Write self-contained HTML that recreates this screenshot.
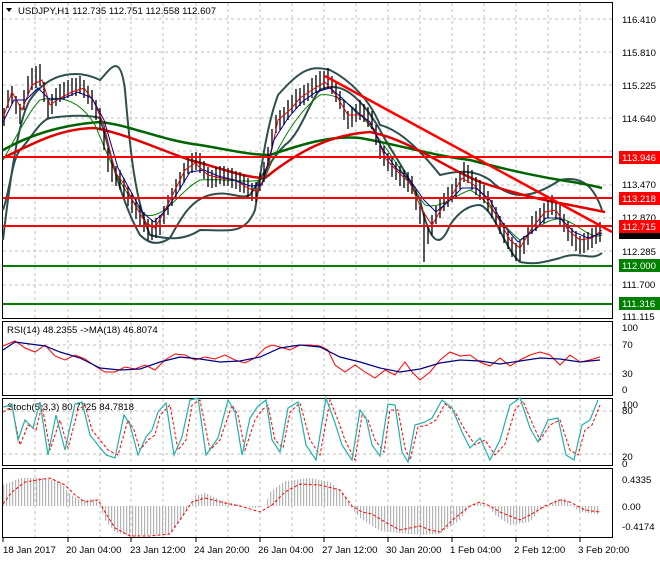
<!DOCTYPE html>
<html><head><meta charset="utf-8"><style>
html,body{margin:0;padding:0;background:#fff;}
body{width:660px;height:560px;overflow:hidden;font-family:"Liberation Sans",sans-serif;}
svg text{font-family:"Liberation Sans",sans-serif;font-size:9.6px;fill:#000;}
</style></head><body>
<svg width="660" height="560" viewBox="0 0 660 560" xmlns="http://www.w3.org/2000/svg">
<defs><pattern id="vl" width="3" height="10" patternUnits="userSpaceOnUse"><rect x="0" y="0" width="1.2" height="10" fill="#b4b4b4"/></pattern></defs>
<rect width="660" height="560" fill="#fff"/>
<g stroke="#c0c0c0" stroke-dasharray="3,3" stroke-width="1">
<path d="M35 3V318M68 3V318M100 3V318M131 3V318M163 3V318M196 3V318M228 3V318M260 3V318M292 3V318M324 3V318M356 3V318M388 3V318M420 3V318M452 3V318M484 3V318M516 3V318M548 3V318M580 3V318"/>
<path d="M35 322V395M68 322V395M100 322V395M131 322V395M163 322V395M196 322V395M228 322V395M260 322V395M292 322V395M324 322V395M356 322V395M388 322V395M420 322V395M452 322V395M484 322V395M516 322V395M548 322V395M580 322V395"/>
<path d="M35 399V465M68 399V465M100 399V465M131 399V465M163 399V465M196 399V465M228 399V465M260 399V465M292 399V465M324 399V465M356 399V465M388 399V465M420 399V465M452 399V465M484 399V465M516 399V465M548 399V465M580 399V465"/>
<path d="M35 469V537M68 469V537M100 469V537M131 469V537M163 469V537M196 469V537M228 469V537M260 469V537M292 469V537M324 469V537M356 469V537M388 469V537M420 469V537M452 469V537M484 469V537M516 469V537M548 469V537M580 469V537"/>
<path d="M3 19H612M3 52H612M3 85H612M3 118H612M3 151H612M3 185H612M3 218H612M3 251H612M3 285H612M3 345H612M3 374H612M3 411H612M3 454H612"/>
</g>
<g fill="none" stroke="#000" stroke-width="1">
<rect x="2.5" y="2.5" width="610" height="316"/>
<rect x="2.5" y="321.5" width="610" height="74"/>
<rect x="2.5" y="398.5" width="610" height="67"/>
<rect x="2.5" y="468.5" width="610" height="69"/>
</g>
<g fill="none">
<path d="M3 240C10 180 18 120 30 100C50 70 80 70 100 80C110 70 120 50 125 90C130 150 135 200 150 235C170 240 185 240 200 230C230 230 245 235 255 210C260 180 265 130 278 95C300 70 310 65 330 70C350 80 370 100 380 125C400 130 420 150 440 175C460 170 475 170 490 180C510 200 530 200 560 180C585 175 595 190 602 210" stroke="#2f4f4f" stroke-width="2"/>
<path d="M3 210C10 190 12 160 20 150C30 140 40 120 50 118C70 115 90 115 100 118C110 150 120 200 140 235C150 245 160 245 170 238C180 220 190 200 210 195C230 190 240 200 250 195C260 180 270 160 285 145C300 135 310 100 320 90C340 80 360 95 380 130C390 150 400 160 420 200C430 245 440 250 450 225C460 210 470 205 480 205C495 210 505 250 520 262C535 265 545 262 560 258C580 250 590 262 602 253" stroke="#2f4f4f" stroke-width="2"/>
<path d="M3 150C30 135 60 125 100 122C130 125 160 140 200 145C230 150 250 155 270 155C300 145 330 135 360 138C400 145 430 155 470 160C500 168 530 175 560 180C580 183 590 185 602 188" stroke="#006400" stroke-width="2.5"/>
<path d="M3 158C30 145 60 128 95 128C130 135 160 150 190 160C220 168 245 178 265 178C300 150 330 135 370 132C410 140 440 165 480 182C510 192 540 200 570 205C585 208 595 210 605 212" stroke="#e00000" stroke-width="2.5"/>
<path d="M3 160C20 130 30 110 40 100C60 95 80 100 95 125C110 160 120 190 145 215C165 220 180 190 200 180C230 178 250 185 265 178C280 140 300 110 320 95C340 92 360 110 380 140C395 160 410 185 425 205C440 210 455 195 470 190C490 200 500 225 520 240C535 230 550 215 565 220C580 225 590 240 602 235" stroke="#008000" stroke-width="1"/>
<path d="M4 108V126M8 90V108M12 86V104M16 96V114M20 104V124M24 90V110M28 76V96M32 68V90M36 66V88M40 64V86M44 82V102M48 98V118M52 94V114M56 88V106M60 84V102M64 82V100M68 80V98M72 78V96M76 78V96M80 76V94M84 80V98M88 86V104M92 90V110M96 100V120M100 108V130M104 128V150M108 148V172M112 160V182M116 166V186M120 170V190M124 178V198M128 186V206M132 193V213M136 199V219M140 205V225M144 212V232M148 219V240M152 220V240M156 218V238M160 215V235M164 206V224M168 195V215M172 188V206M176 179V199M180 172V190M184 163V183M188 156V174M192 153V173M196 152V170M200 153V173M204 161V179M208 167V187M212 170V188M216 167V187M220 166V184M224 166V186M228 168V186M232 168V188M236 171V189M240 172V192M244 175V193M248 178V198M252 183V201M256 182V202M260 173V191M264 162V182M268 147V165M272 129V149M276 115V133M280 110V130M284 107V125M288 100V120M292 95V113M296 89V109M300 88V106M304 85V105M308 83V101M312 78V98M316 75V93M320 71V91M324 71V89M328 68V88M332 76V94M336 82V102M340 91V109M344 100V120M348 111V129M352 107V127M356 104V122M360 100V120M364 104V122M368 107V127M372 111V129M376 125V145M380 141V159M384 146V166M388 153V171M392 157V177M396 162V180M400 166V186M404 170V188M408 172V192M412 176V194M416 190V210M420 206V224M424 212V262M428 226V244M432 215V235M436 206V224M440 198V218M444 193V211M448 187V207M452 184V202M456 178V198M460 171V189M464 162V182M468 165V183M472 170V190M476 177V195M480 180V200M484 185V203M488 191V211M492 200V218M496 207V227M500 216V234M504 223V243M508 231V249M512 237V257M516 243V261M520 241V261M524 236V254M528 225V245M532 216V234M536 211V231M540 208V226M544 203V223M548 200V218M552 195V215M556 201V219M560 205V225M564 214V232M568 221V241M572 228V246M576 231V251M580 236V254M584 233V253M588 232V250M592 228V248M596 226V244M600 222V242" stroke="#000" stroke-width="1.3"/>
<path d="M3 118L12 92L22 110L32 85L42 80L50 105L60 98L72 92L84 88L94 102L104 125L115 172L125 185L135 205L145 222L155 228L165 210L175 190L185 170L195 163L208 175L220 178L235 180L248 188L258 192L268 168L278 120L290 110L300 98L312 90L325 82L336 95L348 115L362 115L375 130L385 158L398 172L410 183L422 210L432 225L442 208L452 195L462 178L474 185L486 198L498 218L510 240L520 248L532 228L545 212L556 210L568 230L580 240L592 238L602 230" stroke="#e00000" stroke-width="1"/>
<path d="M3 122L14 100L26 100L38 88L50 100L64 98L78 92L92 98L104 120L118 168L130 190L142 212L154 222L166 210L178 192L190 172L204 170L218 176L234 180L250 186L262 185L274 140L288 118L302 102L316 92L330 88L342 98L356 112L370 122L382 148L396 168L410 180L424 200L436 212L448 202L462 188L476 188L490 200L504 226L518 242L532 232L546 218L560 218L574 232L588 238L602 233" stroke="#00008b" stroke-width="1"/>
<path d="M325 76L612 232" stroke="#ff0000" stroke-width="2.5"/>
<path d="M3 157H612M3 198H612M3 226H612" stroke="#ff0000" stroke-width="2"/>
<path d="M3 266H612M3 304H612" stroke="#008000" stroke-width="2"/>
</g>
<path d="M6 8L12 8L9 12Z" fill="#000"/>
<text x="18" y="14">USDJPY,H1  112.735 112.751 112.558 112.607</text>
<g>
<text x="622" y="23">116.410</text>
<text x="622" y="56">115.810</text>
<text x="622" y="89">115.225</text>
<text x="622" y="122">114.640</text>
<text x="622" y="188">113.470</text>
<text x="622" y="221">112.870</text>
<text x="622" y="255">112.285</text>
<text x="622" y="288">111.700</text>
<text x="622" y="320">111.115</text>
<rect x="619" y="151" width="41" height="13" fill="#ff0000"/><text x="622" y="161" style="fill:#fff">113.946</text>
<rect x="619" y="192" width="41" height="13" fill="#ff0000"/><text x="622" y="202" style="fill:#fff">113.218</text>
<rect x="619" y="230" width="41" height="9" fill="#000"/>
<rect x="619" y="220" width="41" height="13" fill="#ff0000"/><text x="622" y="230" style="fill:#fff">112.715</text>
<rect x="619" y="259" width="41" height="13" fill="#008000"/><text x="622" y="269" style="fill:#fff">112.000</text>
<rect x="619" y="297" width="41" height="13" fill="#008000"/><text x="622" y="307" style="fill:#fff">111.316</text>
</g>
<text x="7" y="333">RSI(14) 48.2355  -&gt;MA(18) 46.8074</text>
<path d="M3 346L15 341L25 348L35 352L45 345L55 356L65 360L75 355L85 359L95 366L105 372L115 372L125 367L135 369L145 365L155 370L165 360L175 354L185 355L195 360L205 357L215 359L225 355L235 360L245 363L255 358L265 348L272 345L280 347L290 350L300 345L310 345L320 346L328 350L335 365L345 372L355 365L365 372L375 378L385 370L395 375L405 362L412 372L420 380L430 372L440 360L450 352L460 356L470 355L480 362L490 366L500 358L510 366L520 360L530 355L540 352L550 355L560 365L570 355L580 362L590 360L600 357" fill="none" stroke="#ff0000" stroke-width="1"/>
<path d="M3 350L15 342L30 344L45 346L60 352L80 358L100 368L120 370L140 369L160 362L180 357L200 359L220 362L240 361L260 357L280 348L300 345L320 347L340 357L360 362L380 368L400 372L420 369L440 363L460 360L480 361L500 364L520 361L540 358L560 359L580 362L600 360" fill="none" stroke="#000080" stroke-width="1.2"/>
<g><text x="622" y="331">100</text><text x="622" y="348">70</text><text x="622" y="377">30</text><text x="622" y="393">0</text></g>
<text x="7" y="410">Stoch(5,3,3) 80.7725 84.7818</text>
<path d="M3 412L12 407L20 445L28 425L36 430L42 405L50 450L60 420L68 448L78 410L85 405L92 430L100 440L108 450L118 455L128 420L134 430L140 450L148 440L155 435L160 415L170 405L178 450L186 440L192 405L200 400L210 450L220 440L232 405L238 415L245 450L255 420L262 410L268 405L275 440L283 448L290 412L300 403L310 440L320 455L330 400L338 420L345 440L355 460L362 415L368 420L375 440L384 452L390 410L398 410L405 448L410 460L418 427L428 425L436 420L445 404L455 412L465 430L475 445L485 440L495 455L505 444L515 410L523 401L533 425L540 440L550 425L560 420L570 450L578 455L585 430L592 425L600 405" fill="none" stroke="#ff0000" stroke-width="1" stroke-dasharray="3,2"/>
<path d="M3 407L12 405L18 440L25 420L33 428L40 402L48 455L56 415L65 450L75 404L82 402L90 435L98 445L106 455L115 458L124 415L130 425L138 455L146 437L152 430L158 412L166 403L174 455L182 437L190 400L198 398L206 455L218 438L228 400L235 412L242 455L250 418L258 406L266 400L272 440L280 452L288 408L298 402L306 445L316 460L326 398L334 420L342 445L352 460L360 410L366 418L372 445L380 456L388 404L395 405L402 452L408 462L415 425L425 422L432 418L442 400L452 408L462 432L470 448L480 438L490 460L500 440L510 405L520 398L530 428L538 442L548 420L558 418L566 455L574 460L582 425L590 420L598 400" fill="none" stroke="#20b2aa" stroke-width="1.2"/>
<g><text x="622" y="408">100</text><text x="622" y="414">80</text><text x="622" y="460">20</text><text x="622" y="467">0</text></g>
<path d="M3 506L3 485L20 478L45 478L60 482L70 494L80 500L95 499L100 506L105 520L115 532L130 536L150 535L170 534L180 520L190 506L195 496L205 493L220 500L240 505L255 508L265 506L270 492L285 481L310 478L330 482L345 495L350 506L360 518L380 531L400 533L420 535L440 534L460 520L470 506L478 502L488 506L495 515L510 525L530 522L540 510L548 506L555 500L565 498L572 506L580 512L598 514L600 506Z" fill="url(#vl)"/>
<path d="M3 504L12 492L25 482L50 478L65 485L75 495L85 502L98 500L105 512L115 528L130 536L150 536L170 534L180 520L192 502L205 498L225 503L240 506L260 512L272 505L285 492L300 484L320 485L340 490L352 506L362 512L372 514L385 522L400 530L420 526L430 530L440 532L455 518L470 506L480 502L490 506L500 512L520 520L530 515L545 506L560 500L570 502L585 510L600 512" fill="none" stroke="#ff0000" stroke-width="1" stroke-dasharray="3,2"/>
<g><text x="622" y="483">0.4335</text><text x="622" y="510">0.00</text><text x="622" y="530">-0.4174</text></g>
<path d="M3 538V542M68 538V542M131 538V542M196 538V542M260 538V542M324 538V542M388 538V542M452 538V542M516 538V542M580 538V542" stroke="#000"/>
<g><text x="3" y="553">18 Jan 2017</text><text x="66" y="553">20 Jan 04:00</text><text x="130" y="553">23 Jan 12:00</text><text x="194" y="553">24 Jan 20:00</text><text x="258" y="553">26 Jan 04:00</text><text x="322" y="553">27 Jan 12:00</text><text x="386" y="553">30 Jan 20:00</text><text x="450" y="553">1 Feb 04:00</text><text x="514" y="553">2 Feb 12:00</text><text x="578" y="553">3 Feb 20:00</text></g>
</svg>
</body></html>
